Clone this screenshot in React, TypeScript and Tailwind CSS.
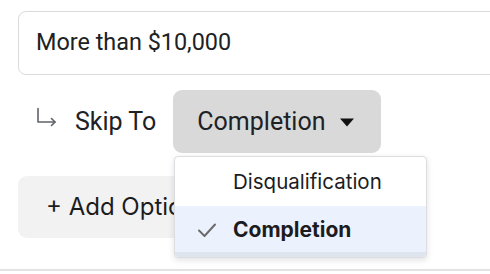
import { useState } from "react";

const options = ["Disqualification", "Completion"];

function SkipArrow() {
  return (
    <svg width="22" height="22" viewBox="0 0 22 22" fill="none" stroke="#5f6368" strokeWidth="1.6" strokeLinecap="round" strokeLinejoin="round">
      <path d="M2 1.5v13.5h17" />
      <path d="M15.5 11.5l3.5 3.5-3.5 3.5" />
    </svg>
  );
}

function Caret() {
  return (
    <svg width="16" height="9" viewBox="0 0 16 9">
      <path d="M1 0.5h14l-7 8z" fill="#111" />
    </svg>
  );
}

function Check() {
  return (
    <svg width="20" height="16" viewBox="0 0 20 16" fill="none" stroke="#6b6b6b" strokeWidth="2" strokeLinecap="round" strokeLinejoin="round">
      <path d="M2 8.5l5.5 5.5L18 2.5" />
    </svg>
  );
}

export default function App() {
  const [selected, setSelected] = useState("Completion");

  return (
    <div className="relative h-[274px] w-[490px] overflow-hidden bg-white pl-[18px] pt-[11px] font-['Roboto',sans-serif] text-[#202124]">
      <div className="flex h-[64px] w-[500px] items-center rounded-[8px] border border-[#dadada] pl-[17px] text-[23.4px]">
        More than $10,000
      </div>

      <div className="mt-[15px] flex h-[63px] items-center">
        <div className="ml-[18px] mt-[-8px]">
          <SkipArrow />
        </div>
        <span className="ml-[17px] text-[25px]">Skip To</span>
        <button
          type="button"
          className="ml-[17px] flex h-[63px] w-[208px] items-center rounded-[9px] bg-[#d9d9d9] pl-[24px] text-[25px]"
        >
          {selected}
          <span className="ml-[14px] mt-[2px]">
            <Caret />
          </span>
        </button>
      </div>

      <button
        type="button"
        className="mt-[23px] flex h-[62px] w-[230px] items-center rounded-[9px] bg-[#f2f2f2] pl-[28px] font-['Inter',sans-serif] text-[24px] text-[#1c1c1e]"
      >
        + Add Option
      </button>

      <div className="-ml-[18px] mt-[31px] h-[2px] w-[490px] bg-[#e3e3e6]" />

      <div className="absolute left-[174px] top-[156px] w-[253px] overflow-hidden rounded-[4px] border border-[#dcdde0] bg-white pb-[5px] font-['Inter',sans-serif] text-[20.5px] text-[#1c1c1e] shadow-[0_2px_6px_rgba(0,0,0,0.12)]">
        {options.map((option) => {
          const active = option === selected;
          return (
            <div
              key={option}
              onClick={() => setSelected(option)}
              className={
                active
                  ? "flex h-[46px] items-center bg-[#ebf2fd] pt-[1px] text-[21px] font-bold"
                  : "flex h-[49px] items-center pt-[1px]"
              }
            >
              <span className="flex w-[58px] justify-center pl-[6px]">{active ? <Check /> : null}</span>
              {option}
            </div>
          );
        })}
        <div className="absolute bottom-0 left-0 h-[5px] w-full bg-[#dfe5ee]" />
      </div>
    </div>
  );
}
